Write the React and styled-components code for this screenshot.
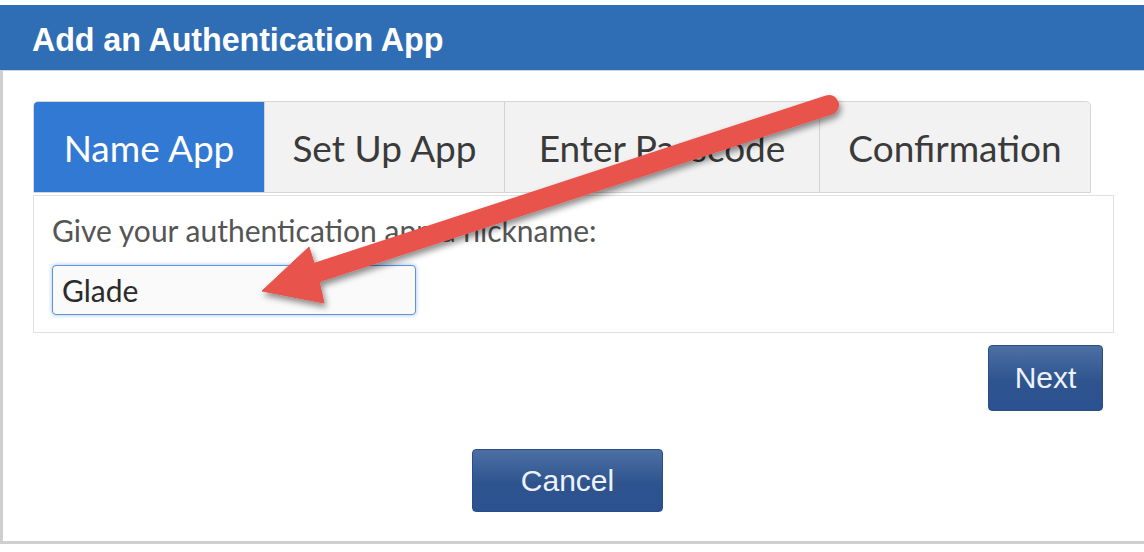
import React from "react";
import styled, { createGlobalStyle } from "styled-components";

const GlobalStyle = createGlobalStyle`
  html, body {
    margin: 0;
    padding: 0;
    background: #ffffff;
  }
  * {
    box-sizing: border-box;
  }
`;

const steps = [
  { label: "Name App", width: 230 },
  { label: "Set Up App", width: 240 },
  { label: "Enter Passcode", width: 315 },
  { label: "Confirmation", width: 271 },
];

const Page = styled.div`
  position: relative;
  width: 1144px;
  height: 552px;
  padding-top: 5px;
  background: #ffffff;
  overflow: hidden;
`;

const Header = styled.div`
  height: 66px;
  display: flex;
  align-items: center;
  padding: 5px 0 0 32px;
  background: #2f6db5;
  border-bottom: 1px solid #c9d4e0;
  color: #ffffff;
  font-family: "Liberation Sans", Arial, sans-serif;
  font-weight: 700;
  font-size: 32.3px;
  letter-spacing: -0.1px;
`;

const Body = styled.div`
  height: 473px;
  padding: 30px 30px 0 30px;
  border-left: 3px solid #cfcfcf;
  border-bottom: 3px solid #cfcfcf;
`;

const Tabs = styled.div`
  display: inline-flex;
  border: 1px solid #d6d6d6;
  border-radius: 5px 5px 0 0;
  overflow: hidden;
  background: #f2f2f2;
`;

const Tab = styled.div`
  width: ${(p) => p.$w}px;
  height: 90px;
  display: flex;
  align-items: center;
  justify-content: center;
  font-family: Lato, "Open Sans", sans-serif;
  font-size: 37px;
  white-space: nowrap;
  color: ${(p) => (p.$active ? "#ffffff" : "#3a3a3a")};
  background: ${(p) => (p.$active ? "#3279d3" : "#f2f2f2")};
  & + & {
    border-left: 1px solid #d3d3d3;
  }
`;

const Panel = styled.div`
  margin-top: 2px;
  height: 138px;
  border: 1px solid #e1e1e1;
  padding: 15px 18px 0 18px;
`;

const Label = styled.div`
  font-family: Lato, "Open Sans", sans-serif;
  font-size: 30px;
  color: #555555;
  line-height: 38px;
`;

const NameInput = styled.input`
  display: block;
  margin-top: 16px;
  width: 364px;
  height: 50px;
  padding: 0 9px;
  border: 1px solid #5e95d6;
  border-radius: 4px;
  background: #fafafa;
  box-shadow: 0 0 4px rgba(80, 140, 220, 0.55);
  font-family: Lato, "Open Sans", sans-serif;
  font-size: 30px;
  color: #2b2b2b;
  outline: none;
  caret-color: #000;
`;

const NextRow = styled.div`
  display: flex;
  justify-content: flex-end;
  padding-right: 11px;
  margin-top: 12px;
`;

const CancelRow = styled.div`
  display: flex;
  justify-content: center;
  padding-right: 12px;
  margin-top: 38px;
`;

const Button = styled.button`
  width: ${(p) => p.$w}px;
  height: ${(p) => p.$h}px;
  border: 1px solid #2a4d86;
  border-radius: 4px;
  background: linear-gradient(#4d6fa3, #2e548f 55%, #2c5190);
  color: #eef2f8;
  font-family: "Liberation Sans", Arial, sans-serif;
  font-size: 30px;
  padding: 0;
`;

const ArrowLayer = styled.svg`
  position: absolute;
  left: 0;
  top: 0;
  pointer-events: none;
`;

const Arrow = () => (
  <ArrowLayer width="1144" height="552" viewBox="0 0 1144 552">
    <defs>
      <filter id="shadow" x="-20%" y="-20%" width="140%" height="140%">
        <feDropShadow dx="2" dy="4" stdDeviation="3" floodColor="#000" floodOpacity="0.45" />
      </filter>
    </defs>
    <g filter="url(#shadow)" fill="#e8524b" stroke="#e8524b">
      <line x1="300" y1="278" x2="829" y2="105" strokeWidth="20" strokeLinecap="round" />
      <polygon points="262,291 309,247 318,276 324,303" strokeWidth="1" strokeLinejoin="round" />
    </g>
  </ArrowLayer>
);

export default function App() {
  return (
    <>
      <GlobalStyle />
      <Page>
        <Header>Add an Authentication App</Header>
        <Body>
          <Tabs>
            {steps.map((s, i) => (
              <Tab key={s.label} $w={s.width} $active={i === 0}>
                {s.label}
              </Tab>
            ))}
          </Tabs>
          <Panel>
            <Label>Give your authentication app a nickname:</Label>
            <NameInput defaultValue="Glade" autoFocus />
          </Panel>
          <NextRow>
            <Button $w={115} $h={66}>Next</Button>
          </NextRow>
          <CancelRow>
            <Button $w={191} $h={63}>Cancel</Button>
          </CancelRow>
        </Body>
        <Arrow />
      </Page>
    </>
  );
}
